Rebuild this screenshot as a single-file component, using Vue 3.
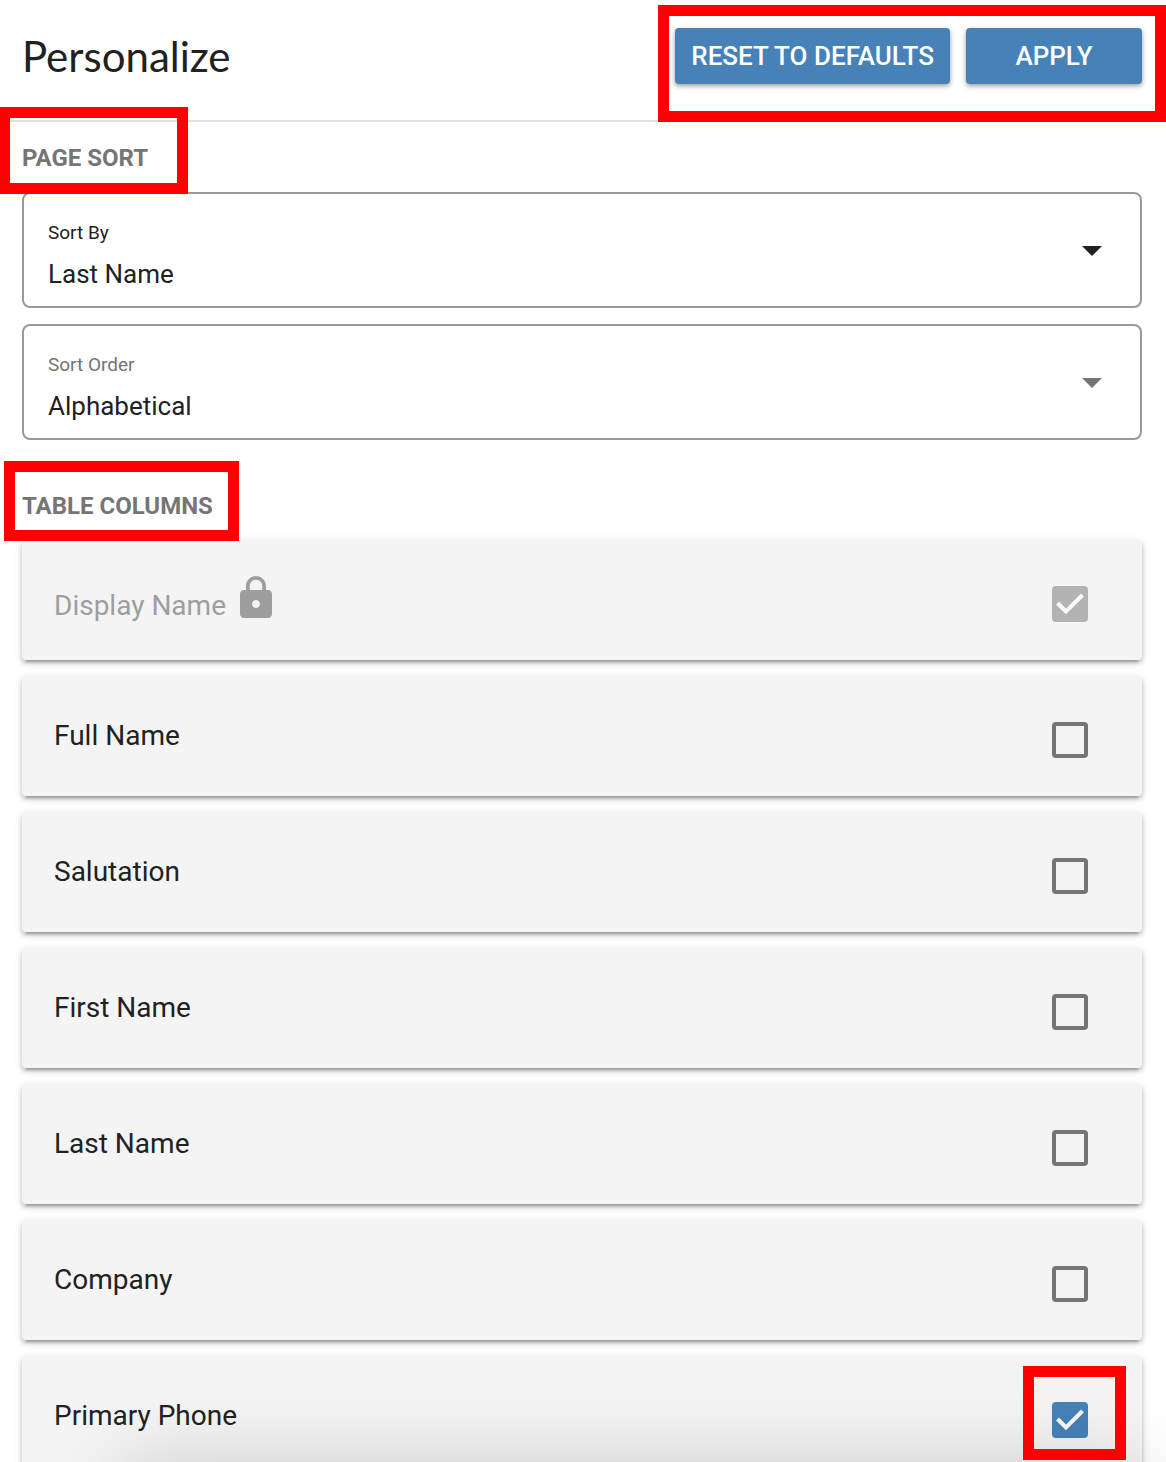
<template>
  <main class="page">
    <header class="header">
      <h1>Personalize</h1>
      <div class="actions marked mark-actions">
        <button type="button" @click="reset">RESET TO DEFAULTS</button>
        <button type="button">APPLY</button>
      </div>
    </header>

    <section class="section">
      <h2><span class="marked mark-sort">PAGE SORT</span></h2>
      <div class="fields">
        <div v-for="field in fields" :key="field.id" class="field" :class="{ muted: field.muted }">
          <label :for="field.id">{{ field.label }}</label>
          <select :id="field.id" v-model="field.value">
            <option v-for="option in field.options" :key="option">{{ option }}</option>
          </select>
          <svg class="arrow" viewBox="0 0 20 10"><path d="M0 0h20L10 10z" /></svg>
        </div>
      </div>
    </section>

    <section class="section columns">
      <h2><span class="marked mark-columns">TABLE COLUMNS</span></h2>
      <ul>
        <li v-for="col in columns" :key="col.id">
          <label class="row" :class="{ locked: col.locked }" :for="col.id">
            <span class="name">
              {{ col.name }}
              <svg v-if="col.locked" class="lock" viewBox="0 0 24 24">
                <path d="M18 8h-1V6c0-2.76-2.24-5-5-5S7 3.24 7 6v2H6c-1.1 0-2 .9-2 2v10c0 1.1.9 2 2 2h12c1.1 0 2-.9 2-2V10c0-1.1-.9-2-2-2zm-6 9c-1.1 0-2-.9-2-2s.9-2 2-2 2 .9 2 2-.9 2-2 2zm3.1-9H8.9V6c0-1.71 1.39-3.1 3.1-3.1s3.1 1.39 3.1 3.1v2z" />
              </svg>
            </span>
            <span class="check" :class="{ 'marked mark-check': col.id === 'primary-phone' }">
              <input :id="col.id" v-model="col.checked" type="checkbox" :disabled="col.locked">
              <svg v-if="col.checked" class="tick" viewBox="0 0 36 36"><path d="M5.5 17l8.500 8.500L30.500 9" /></svg>
            </span>
          </label>
        </li>
      </ul>
    </section>
    <div class="shade"></div>
  </main>
</template>

<script setup>
import { ref } from 'vue'

const fields = ref([
  { id: 'sort-by', label: 'Sort By', value: 'Last Name', options: ['Last Name', 'First Name', 'Company'] },
  { id: 'sort-order', label: 'Sort Order', value: 'Alphabetical', options: ['Alphabetical', 'Reverse Alphabetical'], muted: true }
])

const defaults = () => [
  { id: 'display-name', name: 'Display Name', checked: true, locked: true },
  { id: 'full-name', name: 'Full Name', checked: false },
  { id: 'salutation', name: 'Salutation', checked: false },
  { id: 'first-name', name: 'First Name', checked: false },
  { id: 'last-name', name: 'Last Name', checked: false },
  { id: 'company', name: 'Company', checked: false },
  { id: 'primary-phone', name: 'Primary Phone', checked: true }
]
const columns = ref(defaults())
const reset = () => { columns.value = defaults() }
</script>

<style>
body { margin: 0; background: #fff; }
</style>

<style scoped>
* { box-sizing: border-box; }
.page { height: 100vh; overflow: hidden; font-family: Roboto, sans-serif; color: #212121; }

.header { display: flex; justify-content: space-between; align-items: flex-start; height: 122px; padding: 28px 24px 0 22px; border-bottom: 2px solid #e0e0e0; }
h1 { margin: 0; font: 400 42px/56px Lato, sans-serif; }
.actions { display: flex; gap: 16px; }
button { height: 56px; min-width: 176px; padding: 0 16px; border: 0; border-radius: 4px; background: #4682b8; color: #fff; font: 500 26px/56px Roboto, sans-serif; box-shadow: 0 2px 5px rgba(0, 0, 0, 0.4); cursor: pointer; }

.section { padding: 0 24px 0 22px; }
.columns { margin-top: 30px; }
h2 { margin: 0; padding: 20px 0 18px; font-size: 24px; font-weight: 700; line-height: 32px; color: #757575; }
.fields { display: flex; flex-direction: column; gap: 16px; }
.field { position: relative; display: flex; flex-direction: column; gap: 10px; padding: 24px 24px 16px; border: 2px solid #999; border-radius: 8px; }
.field label { font-size: 19px; line-height: 30px; }
.field select { appearance: none; width: 100%; height: 32px; padding: 0; border: 0; background: transparent; color: #212121; font: 400 26px/32px Roboto, sans-serif; }
.arrow { position: absolute; top: 52px; right: 38px; width: 20px; height: 10px; fill: #212121; pointer-events: none; }
.muted label { color: #757575; }
.muted .arrow { fill: #757575; }

ul { display: flex; flex-direction: column; gap: 16px; margin: 0; padding: 0; list-style: none; }
.row { display: flex; justify-content: space-between; align-items: center; height: 120px; padding: 0 54px 0 32px; border-radius: 4px; background: #f4f4f4; box-shadow: 0 6px 2px -4px rgba(0, 0, 0, 0.2), 0 3px 4px rgba(0, 0, 0, 0.2), 0 2px 10px rgba(0, 0, 0, 0.12); }
.name { display: flex; align-items: flex-end; gap: 6px; font-size: 28px; line-height: 32px; }
.locked .name { padding-bottom: 4px; color: #9e9e9e; }
.lock { width: 48px; height: 48px; fill: #9e9e9e; }
.check { position: relative; display: flex; margin-top: 8px; }
.check input { appearance: none; width: 36px; height: 36px; margin: 0; border: 4px solid #757575; border-radius: 4px; }
.check input:checked { border-color: #4682b8; background: #4682b8; }
.check input:disabled { border-color: #b3b3b3; background: #b3b3b3; }
.tick { position: absolute; inset: 0; width: 36px; height: 36px; fill: none; stroke: #fafafa; stroke-width: 4; pointer-events: none; }

/* red call-out frames */
.marked { position: relative; }
.marked::after { content: ''; position: absolute; z-index: 2; border: 11px solid #f00; pointer-events: none; }
.mark-actions::after { inset: -23px -24px -38px -17px; }
.mark-sort::after { inset: -37px -40px -22px -23px; }
.mark-columns::after { inset: -31px -26px -21px -18px; }
.mark-check::after { inset: -36px -38px -22px -29px; }

.shade { position: fixed; z-index: 1; top: 100%; left: 120px; right: 20px; height: 100px; box-shadow: 0 0 80px rgba(0, 0, 0, 0.16); pointer-events: none; }
</style>
